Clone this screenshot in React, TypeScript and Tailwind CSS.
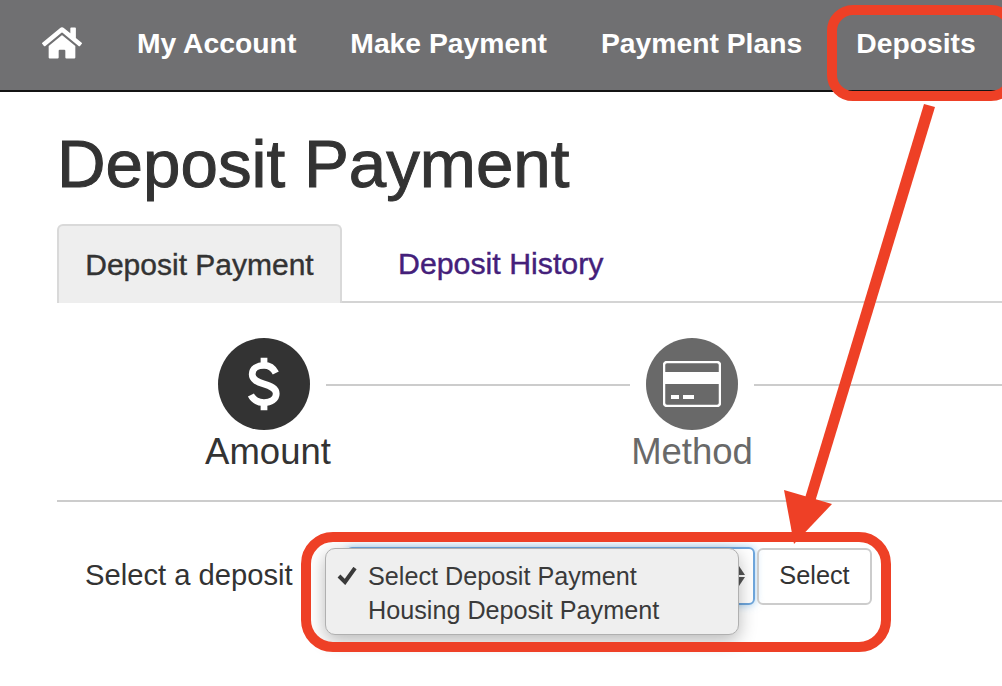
import { FaHome } from "react-icons/fa";

const navItems = ["My Account", "Make Payment", "Payment Plans", "Deposits"];

function Step({ label, muted, children, shift }: { label: string; muted?: boolean; children: React.ReactNode; shift?: boolean }) {
  return (
    <div className="flex flex-col items-center w-[126px]">
      <div className={`w-[92px] h-[92px] rounded-full flex items-center justify-center ${muted ? "bg-[#696969]" : "bg-[#333333]"} ${shift ? "-translate-x-[4px]" : ""}`}>
        {children}
      </div>
      <span className={`text-[36.5px] leading-[44px] whitespace-nowrap ${muted ? "text-[#696969]" : "text-[#333333]"}`}>{label}</span>
    </div>
  );
}

export default function App() {
  return (
    <div className="relative w-[1002px] h-[686px] overflow-hidden bg-white font-['Liberation_Sans',Arial,sans-serif] text-[#333333]">
      {/* Nav */}
      <nav className="h-[92px] bg-[#707072] border-b-2 border-[#141414] flex items-center pl-[42px] pb-[3px] text-white">
        <FaHome className="w-[40px] h-[36px] mr-[55px] -mt-[2px]" />
        <div className="flex gap-[54px] text-[28.3px] font-bold leading-none">
          {navItems.map((item) => (
            <span key={item} className="whitespace-nowrap">{item}</span>
          ))}
        </div>
      </nav>

      <main className="pl-[57px]">
        <h1 className="text-[67.3px] leading-[78px] mt-[33px] font-normal [-webkit-text-stroke:1px_#333333] whitespace-nowrap">Deposit Payment</h1>

        {/* Tabs */}
        <div className="flex mt-[21px] h-[79px] border-b-2 border-[#d4d4d4] text-[30px]">
          <div className="w-[285px] h-[79px] bg-[#eeeeee] border-2 border-b-0 border-[#d9d9d9] rounded-t-[6px] flex items-center justify-center [-webkit-text-stroke:0.4px_#333333] whitespace-nowrap">
            Deposit Payment
          </div>
          <div className="ml-[56px] pt-[2px] flex items-center text-[30.3px] text-[#44207a] [-webkit-text-stroke:0.4px_#44207a] whitespace-nowrap">Deposit History</div>
        </div>

        {/* Steps */}
        <div className="flex items-start mt-[35px] pl-[148px] h-[164px] border-b-2 border-[#cccccc]">
          <Step label="Amount" shift>
            <svg viewBox="0 0 40 64" className="w-[34px] h-[54px]" fill="none" stroke="white" strokeWidth="8">
              <path d="M34 19C31 13 26 10 20 10 12 10 6 14 6 20.5 6 27 12 29.5 20 32 28 34.5 34.5 37 34.5 43.5 34.5 50 28 54 20 54 13 54 7.5 51 4.5 45" />
              <path d="M20 1V10M20 54V63" />
            </svg>
          </Step>
          <div className="w-[304px] h-[2px] bg-[#cccccc] mt-[46px] -ml-[5px]" />
          <div className="-ml-[1px]">
            <Step label="Method" muted>
              <svg viewBox="0 0 58 46" className="w-[58px] h-[46px]" fill="none">
                <rect x="1" y="1" width="56" height="44" rx="3" stroke="white" strokeWidth="2.5" />
                <rect x="4" y="4" width="50" height="8" fill="#696969" />
                <rect x="1" y="11" width="56" height="12" fill="white" />
                <rect x="8" y="34" width="8" height="4" fill="white" />
                <rect x="20" y="34" width="11" height="4" fill="white" />
              </svg>
            </Step>
          </div>
          <div className="flex-1 h-[2px] bg-[#cccccc] mt-[46px] -ml-[1px]" />
        </div>

        {/* Select row */}
        <div className="flex items-center mt-[45px] pl-[28px] text-[29.2px]">
          <span className="w-[261px] whitespace-nowrap">Select a deposit</span>
          <div className="w-[409px] h-[58px] border-2 border-[#6ea6dc] rounded-[6px] shadow-[0_0_8px_rgba(102,175,233,0.6)] flex items-center justify-end pr-[8px] text-[#555555]">
            <svg viewBox="0 0 16 26" className="w-[16px] h-[26px]" fill="currentColor">
              <path d="M8 0L16 12H0Z" />
              <path d="M8 26L16 14H0Z" />
            </svg>
          </div>
          <div className="ml-[2px] w-[115px] h-[57px] border-2 border-[#cccccc] rounded-[6px] flex items-center justify-center text-[25.3px]">Select</div>
        </div>
      </main>

      {/* Native select menu */}
      <div className="absolute left-[325px] top-[548px] w-[414px] h-[87px] bg-[#efefef] border border-[#b0b0b0] rounded-[10px] shadow-[0_6px_18px_rgba(0,0,0,0.28)] text-[25.2px] leading-[34px] text-[#3a3a3a] pl-[42px] pt-[10px] whitespace-nowrap">
        <svg viewBox="0 0 20 18" className="absolute left-[11px] top-[18px] w-[20px] h-[18px]" fill="none" stroke="#3a3a3a" strokeWidth="4">
          <path d="M2 9L8 15L18 1" />
        </svg>
        <div>Select Deposit Payment</div>
        <div>Housing Deposit Payment</div>
      </div>

      {/* Annotations */}
      <div className="absolute left-[827px] top-[5px] w-[190px] h-[96px] border-[10px] border-[#ee4026] rounded-[26px]" />
      <div className="absolute left-[301px] top-[532px] w-[590px] h-[120px] border-[10px] border-[#ee4026] rounded-[32px]" />
      <svg className="absolute left-0 top-0 w-[1002px] h-[686px] pointer-events-none" viewBox="0 0 1002 686" fill="#ee4026">
        <polygon points="924,104 935,107 815,502 805,498" />
        <polygon points="784,490 832,504 794,544" />
      </svg>
    </div>
  );
}
